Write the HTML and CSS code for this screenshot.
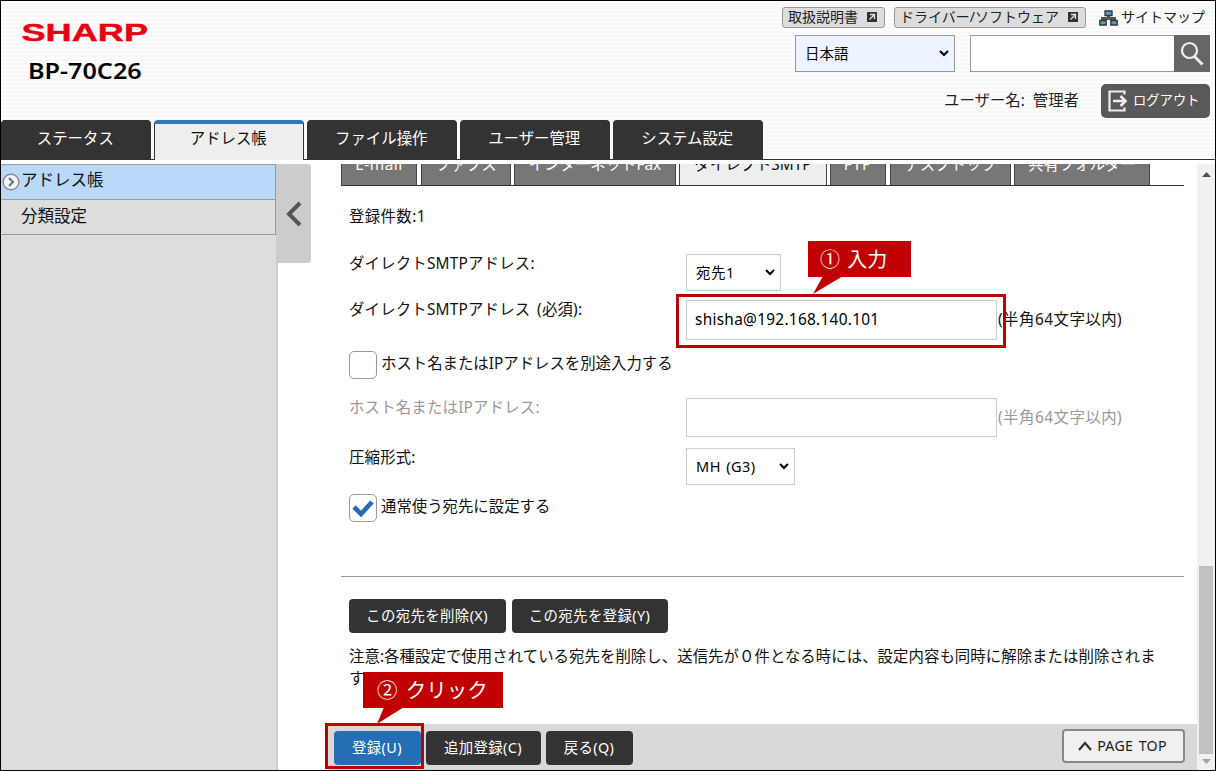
FILE: index.html
```
<!DOCTYPE html>
<html lang="ja">
<head>
  <meta charset="UTF-8">
  <title>BP-70C26 - アドレス帳</title>
  <link rel="stylesheet" href="styles.css">
</head>
<body>
  <div class="page">
    <header class="header">
      <div class="brand">
        <svg class="logo" width="132" height="20"><text x="0.500" y="18" textLength="126.500" lengthAdjust="spacingAndGlyphs">SHARP</text></svg>
        <h1 class="model">BP-70C26</h1>
      </div>
      <div class="tools">
        <div class="links">
          <a class="link-btn">取扱説明書
            <svg width="10" height="10" viewBox="0 0 10 10"><path fill="#333" d="M0 0h10v10H0z"/><path d="M3 2.500h4.500V7M7.500 2.500L2.500 7.500" fill="none" stroke="#ddd" stroke-width="1.400"/></svg>
          </a>
          <a class="link-btn link-driver">ドライバー/ソフトウェア
            <svg width="10" height="10" viewBox="0 0 10 10"><path fill="#333" d="M0 0h10v10H0z"/><path d="M3 2.500h4.500V7M7.500 2.500L2.500 7.500" fill="none" stroke="#ddd" stroke-width="1.400"/></svg>
          </a>
          <a class="sitemap">
            <svg width="19" height="16" viewBox="0 0 19 16"><path d="M9.500 6v3M3.500 11V8.500h12V11" fill="none" stroke="#555" stroke-width="3"/><g fill="#4c9fd5" stroke="#333" stroke-width="1.300"><path d="M6 1h7v4.500H6zM.8 10.500h6.400v4.500H.8zM11.800 10.500h6.400v4.500h-6.400z"/></g></svg>
            <span>サイトマップ</span>
          </a>
        </div>
        <div class="search-row">
          <select class="lang"><option>日本語</option></select>
          <div class="search">
            <input type="text">
            <button>
              <svg width="24" height="26" viewBox="0 0 24 26"><circle cx="9.500" cy="9.500" r="7.500" fill="none" stroke="#eee" stroke-width="2.200"/><path d="M14.500 15.500l8 8" stroke="#eee" stroke-width="2.800"/></svg>
            </button>
          </div>
        </div>
        <div class="user-row">
          <span class="user">ユーザー名: 管理者</span>
          <button class="logout">
            <svg width="20" height="22" viewBox="0 0 20 22"><path d="M16.500 4.500V1.500h-15v19h15v-3" fill="none" stroke="#eee" stroke-width="2.200"/><path d="M5 11h12M12.500 6l5 5-5 5" fill="none" stroke="#eee" stroke-width="2.600"/></svg>
            <span>ログアウト</span>
          </button>
        </div>
      </div>
      <nav class="tabs">
        <a class="tab">ステータス</a>
        <a class="tab active">アドレス帳</a>
        <a class="tab">ファイル操作</a>
        <a class="tab">ユーザー管理</a>
        <a class="tab">システム設定</a>
      </nav>
    </header>

    <div class="content">
      <aside class="sidebar">
        <a class="side-item active">
          <svg width="18" height="18" viewBox="0 0 18 18"><circle cx="9" cy="9" r="7.800" fill="#f4f6fa" stroke="#888c94" stroke-width="1.400"/><path d="M7 5l4 4-4 4" fill="none" stroke="#6a7482" stroke-width="2.200"/></svg>
          アドレス帳
        </a>
        <a class="side-item">分類設定</a>
      </aside>
      <div class="divider">
        <button class="toggle">
          <svg width="16" height="26" viewBox="0 0 16 26"><path d="M14 2L3 13l11 11" fill="none" stroke="#555" stroke-width="4"/></svg>
        </button>
      </div>

      <main class="main">
        <div class="subtabs">
          <a class="subtab t-mail">E-mail</a>
          <a class="subtab t-fax">ファクス</a>
          <a class="subtab t-ifax">インターネットFax</a>
          <a class="subtab t-smtp active">ダイレクトSMTP</a>
          <a class="subtab t-ftp">FTP</a>
          <a class="subtab t-desktop">デスクトップ</a>
          <a class="subtab t-folder">共有フォルダー</a>
        </div>

        <div class="form">
          <p class="count">登録件数:1</p>
          <div class="row row-select">
            <label>ダイレクトSMTPアドレス:</label>
            <select class="dest"><option>宛先1</option></select>
          </div>
          <div class="row row-address">
            <label>ダイレクトSMTPアドレス (必須):</label>
            <input class="text" type="text" value="shisha@192.168.140.101">
            <span class="hint">(半角64文字以内)</span>
          </div>
          <div class="row row-check">
            <span class="box"></span>
            <span>ホスト名またはIPアドレスを別途入力する</span>
          </div>
          <div class="row row-host disabled">
            <label>ホスト名またはIPアドレス:</label>
            <input class="text" type="text">
            <span class="hint">(半角64文字以内)</span>
          </div>
          <div class="row row-select">
            <label>圧縮形式:</label>
            <select class="format"><option>MH (G3)</option></select>
          </div>
          <div class="row row-check">
            <span class="box"><svg width="22" height="18" viewBox="0 0 22 18"><path d="M2 8l7 7L20 3" fill="none" stroke="#236eb4" stroke-width="4.600"/></svg></span>
            <span>通常使う宛先に設定する</span>
          </div>
        </div>

        <div class="dest-actions">
          <button class="btn w157">この宛先を削除(X)</button>
          <button class="btn w156">この宛先を登録(Y)</button>
        </div>
        <p class="note">注意:各種設定で使用されている宛先を削除し、送信先が０件となる時には、設定内容も同時に解除または削除されます。</p>

        <footer class="footer">
          <button class="btn primary">登録(U)</button>
          <button class="btn w115">追加登録(C)</button>
          <button class="btn w87">戻る(Q)</button>
          <button class="page-top">
            <svg width="14" height="10" viewBox="0 0 14 10"><path d="M1 9l6-7 6 7" fill="none" stroke="#333" stroke-width="2.200"/></svg>
            <span>PAGE TOP</span>
          </button>
        </footer>
      </main>

      <div class="scrollbar">
        <svg width="9" height="5" viewBox="0 0 9 5"><path d="M0 5l4.500-5L9 5z" fill="#505050"/></svg>
        <div class="thumb"></div>
        <svg width="9" height="5" viewBox="0 0 9 5"><path d="M0 0h9L4.500 5z" fill="#a3a3a3"/></svg>
      </div>
    </div>

    <!-- step annotations -->
    <div class="frame frame-input"></div>
    <div class="frame frame-submit"></div>
    <div class="callout callout-input">① 入力
      <svg class="tail" width="30" height="18"><path d="M10 0h20L0 18z" fill="#c00000"/></svg>
    </div>
    <div class="callout callout-click">② クリック
      <svg class="tail" width="27" height="17"><path d="M7 0h20L0 17z" fill="#c00000"/></svg>
    </div>
  </div>
</body>
</html>
```
FILE: styles.css
```
* {
  box-sizing: border-box;
}

body {
  margin: 0;
  font-family: "Noto Sans", "Noto Sans CJK JP", sans-serif;
  font-size: 15.4px;
  color: #111;
}

button, input, select {
  font-family: inherit;
  margin: 0;
}

svg {
  flex: none;
}

p {
  margin: 0;
}

.page {
  position: relative;
  display: flex;
  flex-direction: column;
  width: 1216px;
  height: 771px;
  border: 1px solid #000;
  background: #fff;
  overflow: hidden;
}

/* header */
.header {
  display: grid;
  grid-template-columns: 1fr auto;
  grid-template-rows: 119px 40px;
  height: 159px;
  border-bottom: 1px solid #333;
  background: repeating-linear-gradient(#fcfcfc 0 2px, #f8f8f8 2px 4px);
}

.brand {
  padding: 22px 0 0 20px;
}

.logo {
  display: block;
  overflow: visible;
}

.logo text {
  font-family: "Liberation Sans", sans-serif;
  font-weight: bold;
  font-size: 24px;
  fill: #e60012;
  stroke: #e60012;
  stroke-width: 0.4px;
}

.model {
  width: max-content;
  margin: 13px 0 0 7px;
  font-size: 21.5px;
  line-height: 30px;
  font-weight: 600;
  color: #000;
  transform: scaleX(1.17);
  transform-origin: left;
}

.tools {
  display: flex;
  flex-direction: column;
  align-items: flex-end;
  padding: 6px 5px 0 0;
}

.links {
  display: flex;
  align-items: center;
  height: 21px;
  font-size: 14px;
  line-height: 17px;
  color: #222;
  white-space: nowrap;
}

.link-btn {
  display: flex;
  align-items: center;
  justify-content: space-between;
  width: 103px;
  height: 21px;
  padding: 0 7px 2px 5px;
  margin-right: 9px;
  border: 1px solid #999;
  border-radius: 3px;
  background: #ddd;
}

.link-btn svg {
  margin-top: 1px;
}

.link-driver {
  width: 192px;
  margin-right: 13px;
}

.sitemap {
  display: flex;
  align-items: center;
  gap: 3px;
  margin-right: 5px;
}

.sitemap span {
  padding-bottom: 2px;
}

select {
  appearance: none;
  border: 1px solid #ccc;
  border-radius: 0;
  padding: 0 9px 2px;
  font-size: 14.5px;
  letter-spacing: 0.5px;
  word-spacing: 1px;
  color: #000;
  background: #fff url("data:image/svg+xml,%3Csvg xmlns='http://www.w3.org/2000/svg' width='10' height='7'%3E%3Cpath d='M1 1l4 4 4-4' fill='none' stroke='%23000' stroke-width='2'/%3E%3C/svg%3E") no-repeat right 5px center;
}

.search-row {
  display: flex;
  gap: 15px;
  margin-top: 7px;
}

.lang {
  width: 160px;
  height: 37px;
  border-color: #999;
  background-color: #edf3ff;
  letter-spacing: 0;
}

.search {
  display: flex;
  width: 240px;
  height: 37px;
}

.search input {
  width: 204px;
  border: 1px solid #999;
  border-right: 0;
}

.search button {
  display: flex;
  align-items: center;
  justify-content: center;
  width: 36px;
  padding: 0;
  border: 0;
  background: #666;
}

.user-row {
  display: flex;
  align-items: center;
  gap: 22px;
  margin-top: 12px;
}

.user {
  padding-bottom: 3px;
  color: #222;
  word-spacing: 4px;
}

.logout {
  display: flex;
  align-items: center;
  gap: 5px;
  width: 109px;
  height: 34px;
  padding: 0 0 0 7px;
  border: 0;
  border-radius: 5px;
  background: #595959;
  color: #fff;
  font-size: 13.3px;
  white-space: nowrap;
}

.logout span {
  padding-bottom: 3px;
}

.tabs {
  grid-column: 1 / 3;
  display: flex;
  gap: 3.4px;
  height: 40px;
}

.tab {
  width: 149.6px;
  padding-right: 1px;
  border: 1px solid #333;
  border-bottom: 0;
  border-radius: 4px 4px 0 0;
  background: #333;
  color: #fff;
  line-height: 36px;
  text-align: center;
}

.tab.active {
  border-top: 4px solid #2e78c0;
  background: #eee;
  color: #111;
  line-height: 30px;
}

/* content */
.content {
  display: flex;
  flex: 1;
  min-height: 0;
  padding-top: 4px;
}

.sidebar {
  width: 275px;
  background: #ddd;
}

.side-item {
  display: flex;
  align-items: center;
  height: 35px;
  padding: 0 0 4px 20px;
  border: 1px solid #999;
  border-width: 0 1px 1px 0;
  font-size: 16.5px;
}

.side-item.active {
  height: 36px;
  padding: 0 0 6px 1px;
  gap: 1px;
  border-top-width: 1px;
  background: #b9d8fa;
}

.side-item svg {
  margin-top: 5px;
}

.divider {
  width: 35px;
  background: linear-gradient(90deg, #ccc 2px, #fff 2px);
}

.toggle {
  display: flex;
  align-items: center;
  justify-content: center;
  width: 35px;
  height: 99px;
  padding: 0;
  border: 0;
  border-radius: 0 3px 3px 0;
  background: #ccc;
}

.main {
  display: flex;
  flex-direction: column;
  width: 886px;
}

.subtabs {
  display: flex;
  align-items: flex-end;
  height: 22px;
  margin: 0 13px 0 30px;
  border-bottom: 1px solid #333;
  overflow: hidden;
}

.subtab {
  flex: none;
  height: 36px;
  margin-right: 4px;
  border: 1px solid #444;
  border-width: 1px 1px 0;
  background: #777;
  color: #fff;
  line-height: 30px;
  text-align: center;
  white-space: nowrap;
}

.subtab.active {
  background: #eee;
  color: #111;
}

.t-mail { width: 76px; letter-spacing: 0.5px; }
.t-fax { width: 90px; margin-right: 3px; }
.t-ifax { width: 162px; margin-right: 3px; }
.t-smtp { width: 148px; margin-right: 3px; }
.t-ftp { width: 56px; letter-spacing: 0.8px; }
.t-desktop { width: 121px; margin-right: 3px; }
.t-folder { width: 136px; }

.form {
  height: 391px;
  margin: 0 13px 0 30px;
  padding: 20px 0 0 8px;
  border-bottom: 1px solid #999;
}

.count {
  height: 48px;
  line-height: 22px;
  letter-spacing: 0.4px;
}

.row {
  display: flex;
  align-items: flex-start;
  white-space: nowrap;
}

.row label {
  width: 337px;
  line-height: 20px;
  letter-spacing: 0.2px;
  word-spacing: 2.5px;
}

.row-select { height: 46px; }
.row-address { height: 51px; }
.row-check { height: 47px; gap: 4px; line-height: 26px; }
.row-host { height: 50px; }

.dest {
  width: 95px;
  height: 37px;
}

.format {
  width: 109px;
  height: 37px;
}

.text {
  width: 311px;
  height: 40px;
  padding: 0 8px 2px;
  border: 1px solid #ccc;
  font-size: 15.4px;
  letter-spacing: 0.28px;
  color: #000;
}

.hint {
  margin-left: 1px;
  line-height: 40px;
  letter-spacing: 0.5px;
}

.disabled {
  color: #999;
}

.disabled .text {
  height: 39px;
}

.box {
  display: flex;
  align-items: center;
  justify-content: center;
  width: 28px;
  height: 28px;
  border: 1px solid #999;
  border-radius: 5px;
  background: #fff;
}

.dest-actions {
  display: flex;
  gap: 6px;
  margin: 22px 0 0 38px;
}

.btn {
  height: 34px;
  padding: 0 1px 3px 0;
  border: 0;
  border-radius: 4px;
  background: #333;
  color: #fff;
  font-size: 14.4px;
  letter-spacing: 0.4px;
  white-space: nowrap;
}

.w157 { width: 157px; }
.w156 { width: 156px; }
.w115 { width: 115px; }
.w87 { width: 87px; }

.note {
  width: 820px;
  margin: 13px 0 0 38px;
  line-height: 22px;
  letter-spacing: 0.06px;
}

.footer {
  display: flex;
  align-items: center;
  gap: 5px;
  height: 46px;
  margin: auto 0 0 17px;
  padding: 2px 12px 0 6px;
  background: #d9d9d9;
}

.primary {
  width: 87px;
  background: #236eb4;
}

.page-top {
  display: flex;
  align-items: center;
  justify-content: center;
  gap: 5px;
  width: 123px;
  height: 34px;
  margin: -4px 0 0 auto;
  padding: 0 2px 0 0;
  border: 2px solid #888;
  border-radius: 4px;
  background: #f0f0f0;
  color: #222;
  font-size: 14.2px;
  letter-spacing: 0.3px;
  word-spacing: 1.5px;
}

.page-top span {
  padding-bottom: 2px;
}

.scrollbar {
  display: flex;
  flex-direction: column;
  align-items: center;
  justify-content: space-between;
  width: 18px;
  padding: 8px 0 6px;
  background: #f1f1f1;
}

.thumb {
  width: 14px;
  height: 188px;
  margin: auto 0 5px;
  background: #c1c1c1;
}

/* annotations drawn over the page */
.frame {
  position: absolute;
  border: 3px solid #c00000;
}

.frame-input {
  left: 675px;
  top: 293px;
  width: 330px;
  height: 54px;
}

.frame-submit {
  left: 324px;
  top: 722px;
  width: 99px;
  height: 46px;
}

.callout {
  position: absolute;
  height: 36px;
  background: #c00000;
  color: #fff;
  font-size: 20px;
  line-height: 37px;
  word-spacing: 2px;
  white-space: nowrap;
}

.callout-input {
  left: 807px;
  top: 240px;
  width: 103px;
  padding-left: 12px;
}

.callout-click {
  left: 362px;
  top: 671px;
  width: 140px;
  padding-left: 14px;
  font-size: 20.5px;
  word-spacing: 3px;
}

.tail {
  position: absolute;
  top: 35px;
}

.callout-input .tail {
  left: 5px;
}

.callout-click .tail {
  left: 14px;
}
```
